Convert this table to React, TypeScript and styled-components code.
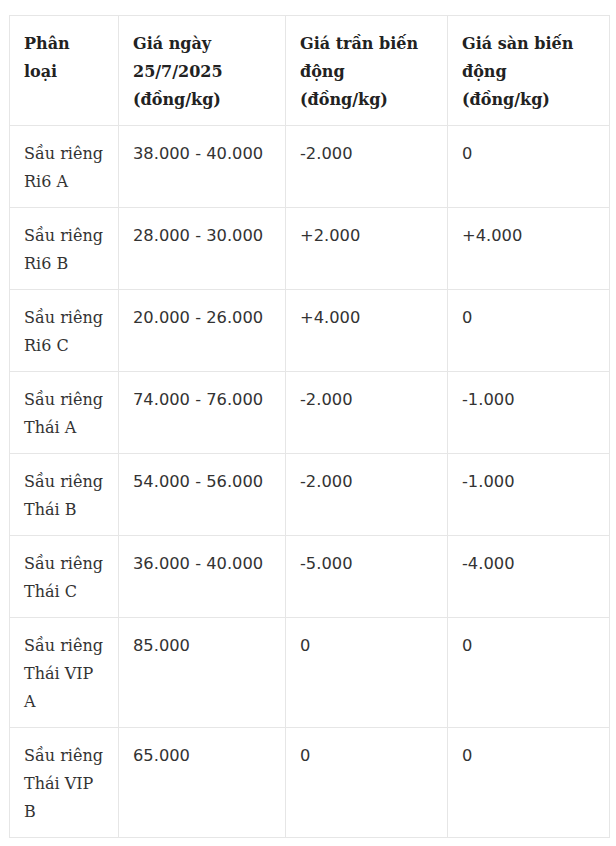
import React from "react";
import styled, { createGlobalStyle } from "styled-components";

const Global = createGlobalStyle`
  html, body { margin: 0; padding: 0; background: #fff; }
  body { font-family: "DejaVu Serif", "Liberation Serif", serif; }
`;

const Page = styled.div`
  padding: 15px 0 0 9px;
`;

const Table = styled.table`
  width: 600px;
  border-collapse: collapse;
  table-layout: fixed;
  font-family: "DejaVu Serif", "Liberation Serif", serif;
  font-size: 16px;
  line-height: 28px;
  color: #333;
`;

const HeadCell = styled.th`
  border: 1px solid #e6e6e6;
  padding: 14px 10px 11px 14px;
  text-align: left;
  vertical-align: top;
  font-family: "DejaVu Serif", "Liberation Serif", serif;
  font-weight: bold;
  color: #222;
`;

const Cell = styled.td<{ $num?: boolean }>`
  border: 1px solid #e6e6e6;
  padding: 14px 14px 11px 14px;
  vertical-align: top;
  font-family: ${(p) =>
    p.$num
      ? '"DejaVu Sans", "Liberation Sans", sans-serif'
      : '"DejaVu Serif", "Liberation Serif", serif'};
  font-size: ${(p) => (p.$num ? "16.3px" : "16px")};
  font-weight: normal;
  color: #333;
`;

const rows: [string, string, string, string][] = [
  ["Sầu riêng Ri6 A", "38.000 - 40.000", "-2.000", "0"],
  ["Sầu riêng Ri6 B", "28.000 - 30.000", "+2.000", "+4.000"],
  ["Sầu riêng Ri6 C", "20.000 - 26.000", "+4.000", "0"],
  ["Sầu riêng Thái A", "74.000 - 76.000", "-2.000", "-1.000"],
  ["Sầu riêng Thái B", "54.000 - 56.000", "-2.000", "-1.000"],
  ["Sầu riêng Thái C", "36.000 - 40.000", "-5.000", "-4.000"],
  ["Sầu riêng Thái VIP A", "85.000", "0", "0"],
  ["Sầu riêng Thái VIP B", "65.000", "0", "0"],
];

export default function App() {
  return (
    <Page>
      <Global />
      <Table>
        <colgroup>
          <col style={{ width: 109 }} />
          <col style={{ width: 167 }} />
          <col style={{ width: 162 }} />
          <col style={{ width: 162 }} />
        </colgroup>
        <thead>
          <tr>
            <HeadCell>Phân loại</HeadCell>
            <HeadCell>Giá ngày 25/7/2025 (đồng/kg)</HeadCell>
            <HeadCell>Giá trần biến động (đồng/kg)</HeadCell>
            <HeadCell>Giá sàn biến động (đồng/kg)</HeadCell>
          </tr>
        </thead>
        <tbody>
          {rows.map((r, i) => (
            <tr key={i}>
              <Cell>{r[0]}</Cell>
              <Cell $num>{r[1]}</Cell>
              <Cell $num>{r[2]}</Cell>
              <Cell $num>{r[3]}</Cell>
            </tr>
          ))}
        </tbody>
      </Table>
    </Page>
  );
}
